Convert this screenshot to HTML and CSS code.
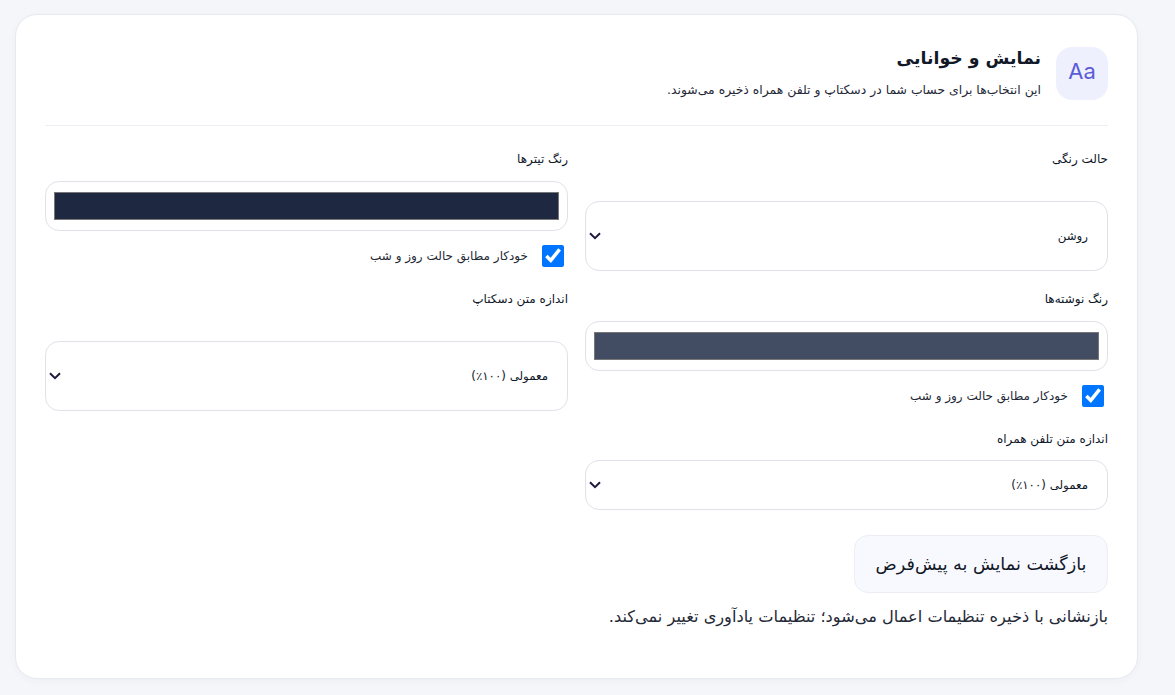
FILE: index.html
```html
<!DOCTYPE html>
<html lang="fa" dir="rtl">
<head>
<meta charset="utf-8">
<title>نمایش و خوانایی</title>
<link rel="stylesheet" href="styles.css">
</head>
<body>
<main class="card">
  <header class="head">
    <div class="icon">Aa</div>
    <div class="head-text">
      <h2>نمایش و خوانایی</h2>
      <p>این انتخاب‌ها برای حساب شما در دسکتاپ و تلفن همراه ذخیره می‌شوند.</p>
    </div>
  </header>
  <section class="grid">
    <div class="field">
      <label class="label">حالت رنگی</label>
      <select class="select tall"><option>روشن</option></select>
    </div>
    <div class="field">
      <label class="label">رنگ تیترها</label>
      <input class="color" type="color" value="#1e2840">
      <label class="check"><input type="checkbox" checked><span>خودکار مطابق حالت روز و شب</span></label>
    </div>
    <div class="field">
      <label class="label">رنگ نوشته‌ها</label>
      <input class="color" type="color" value="#424c63">
      <label class="check"><input type="checkbox" checked><span>خودکار مطابق حالت روز و شب</span></label>
    </div>
    <div class="field">
      <label class="label">اندازه متن دسکتاپ</label>
      <select class="select tall"><option>معمولی (۱۰۰٪)</option></select>
    </div>
    <div class="field">
      <label class="label label-tight">اندازه متن تلفن همراه</label>
      <select class="select"><option>معمولی (۱۰۰٪)</option></select>
    </div>
  </section>
  <button class="reset" type="button">بازگشت نمایش به پیش‌فرض</button>
  <p class="note">بازنشانی با ذخیره تنظیمات اعمال می‌شود؛ تنظیمات یادآوری تغییر نمی‌کند.</p>
</main>
</body>
</html>
```
FILE: styles.css
```css
* { box-sizing: border-box; }
html, body { height: 100%; }
body {
  margin: 0;
  padding: 14px 37px 16px 15px;
  background: #f4f6fa;
  color: #111827;
  font-family: "DejaVu Sans", "Noto Sans", sans-serif;
  overflow: hidden;
}
.card {
  height: 665px;
  padding: 32px 29px 0;
  background: #fff;
  border: 1px solid #e6e9ef;
  border-radius: 22px;
  box-shadow: 0 2px 8px rgba(15, 23, 42, .03);
}
.head {
  display: flex;
  gap: 15px;
  height: 79px;
  border-bottom: 1px solid #eceef3;
}
.icon {
  width: 52px;
  height: 53px;
  padding-bottom: 6px;
  display: flex;
  align-items: center;
  justify-content: center;
  background: #eef0fe;
  border-radius: 16px;
  color: #5b5bd6;
  font: 400 22px Inter, sans-serif;
}
.head-text h2 { margin: 0; font-size: 17.3px; line-height: 22px; font-weight: 700; color: #111827; }
.head-text p { margin: 12px 0 0; font-size: 12.4px; line-height: 18px; color: #1f2937; }
.grid {
  display: grid;
  grid-template-columns: 523px 523px;
  column-gap: 17px;
  row-gap: 19px;
  margin-top: 24px;
}
.field { display: flex; flex-direction: column; }
.label { height: 20px; font-size: 12px; line-height: 18px; font-weight: 500; color: #0f172a; margin-bottom: 11px; }
.label-tight { margin-bottom: 10px; }
.select {
  appearance: none;
  width: 100%;
  height: 50px;
  padding: 0 19px 0 20px;
  background: #fff url("data:image/svg+xml,%3Csvg xmlns='http://www.w3.org/2000/svg' width='12' height='8' viewBox='0 0 12 8'%3E%3Cpath d='M1 1.2 6 6.2 11 1.2' fill='none' stroke='%231e1b3f' stroke-width='2'/%3E%3C/svg%3E") no-repeat left 3px center;
  border: 1px solid #dfe2e8;
  border-radius: 14px;
  color: #0f172a;
  font-family: inherit;
  font-size: 11.8px;
}
.tall { height: 70px; margin-top: auto; }
.color {
  width: 100%;
  height: 50px;
  padding: 6px;
  background: #fff;
  border: 1px solid #dfe2e8;
  border-radius: 14px;
}
.check { display: flex; align-items: center; gap: 14px; height: 26px; margin: 12px 0 2px; padding-right: 4px; font-size: 12px; color: #1f2937; }
.check input { width: 22px; height: 22px; margin: 0; accent-color: #0075ff; }
.reset {
  display: block;
  width: 254px;
  height: 58px;
  margin-top: 25px;
  background: #f8f9fe;
  border: 1px solid #eceef3;
  border-radius: 14px;
  color: #111827;
  font-family: inherit;
  font-size: 17.6px;
}
.note { margin: 14px 0 0; font-size: 16.2px; line-height: 20px; color: #1f2937; }
```
